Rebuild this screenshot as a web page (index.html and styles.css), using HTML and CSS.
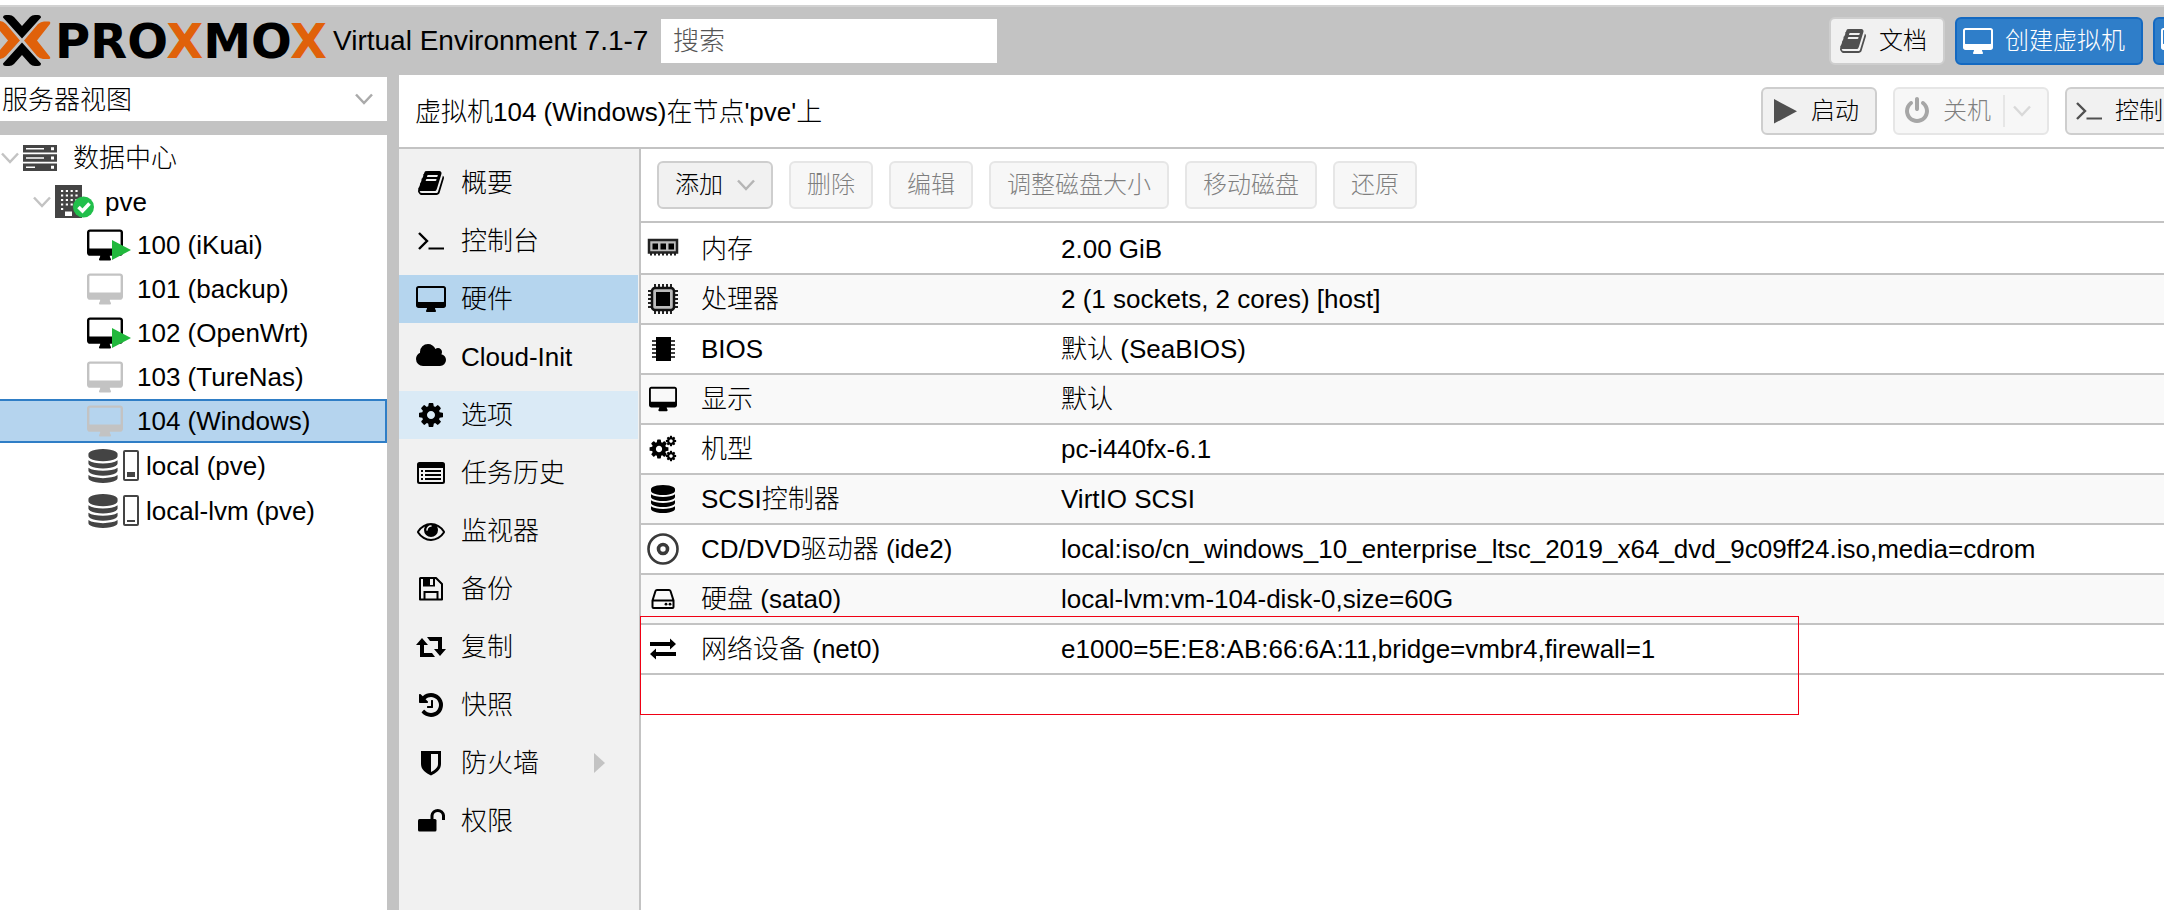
FILE: index.html
```html
<!DOCTYPE html>
<html lang="zh-CN">
<head>
<meta charset="utf-8">
<title>Proxmox Virtual Environment</title>
<link rel="stylesheet" href="styles.css">
</head>
<body>
<svg class="sprite" aria-hidden="true">
  <defs>
    <symbol id="i-desktop" viewBox="0 -64 1920 1792"><path d="M1792 992v-832q0-13-9.500-22.500t-22.500-9.500h-1600q-13 0-22.500 9.500t-9.500 22.500v832q0 13 9.500 22.500t22.500 9.500h1600q13 0 22.500-9.500t9.500-22.500zm128-832v1088q0 66-47 113t-113 47h-544q0 37 16 77.500t32 71 16 43.500q0 26-19 45t-45 19h-512q-26 0-45-19t-19-45q0-14 16-44t32-70 16-78h-544q-66 0-113-47t-47-113v-1088q0-66 47-113t113-47h1600q66 0 113 47t47 113z"/></symbol>
    <symbol id="i-book" viewBox="0 0 1792 1792"><path d="M1703 478q40 57 18 129l-275 906q-19 64-76.500 107.500t-122.500 43.500h-923q-77 0-148.500-53.500t-99.500-131.500q-24-67-2-127 0-4 3-27t4-37q1-8-3-21.500t-3-19.500q2-11 8-21t16.500-23.500 16.500-23.500q23-38 45-91.500t30-91.500q3-10 .5-30t-.5-28q3-11 17-28t17-23q21-36 42-92t25-90q1-9-2.500-32t.5-28q4-13 22-30.500t22-22.500q19-26 42.500-84.500t27.500-96.500q1-8-3-25.500t-2-26.500q2-8 9-18t18-23 17-21q8-12 16.500-30.500t15-35 16-36 19.500-32 26.500-23.500 36-11.500 47.500 5.500l-1 3q38-9 51-9h761q74 0 114 56t18 130l-274 906q-36 119-71.500 153.500t-128.500 34.500h-869q-27 0-38 15-11 16-1 43 24 70 144 70h923q29 0 56-15.500t35-41.500l300-987q7-22 5-57 38 15 59 43zm-1064 2q-4 13 2 22.500t20 9.500h608q13 0 25.500-9.500t16.500-22.500l21-64q4-13-2-22.500t-20-9.500h-608q-13 0-25.500 9.500t-16.500 22.500zm-83 256q-4 13 2 22.500t20 9.500h608q13 0 25.500-9.500t16.500-22.500l21-64q4-13-2-22.500t-20-9.500h-608q-13 0-25.500 9.500t-16.500 22.500z"/></symbol>
    <symbol id="i-cog" viewBox="0 0 1792 1792"><path d="M1152 896q0-106-75-181t-181-75-181 75-75 181 75 181 181 75 181-75 75-181zm512-109v222q0 12-8 23t-20 13l-185 28q-19 54-39 91 35 50 107 138 10 12 10 25t-9 23q-27 37-99 108t-94 71q-12 0-26-9l-138-108q-44 23-91 38-16 136-29 186-7 28-36 28h-222q-14 0-24.500-8.500t-11.500-21.500l-28-184q-49-16-90-37l-141 107q-10 9-25 9-14 0-25-11-126-114-165-168-7-10-7-23 0-12 8-23 15-21 51-66.500t54-70.500q-27-50-41-99l-183-27q-13-2-21-12.500t-8-23.500v-222q0-12 8-23t19-13l186-28q14-46 39-92-40-57-107-138-10-12-10-24 0-10 9-23 26-36 98.500-107.500t94.500-71.500q13 0 26 10l138 107q44-23 91-38 16-136 29-186 7-28 36-28h222q14 0 24.500 8.500t11.500 21.500l28 184q49 16 90 37l142-107q9-9 24-9 13 0 25 10 129 119 165 170 7 8 7 22 0 12-8 23-15 21-51 66.500t-54 70.500q26 50 41 98l183 28q13 2 21 12.500t8 23.500z"/></symbol>
    <symbol id="i-cogs" viewBox="0 0 28 28"><use href="#i-cog" x="-1" y="3" width="22" height="22"/><use href="#i-cog" x="16" y="0" width="12" height="12"/><use href="#i-cog" x="16" y="15" width="12" height="12"/></symbol>
    <symbol id="i-database" viewBox="0 0 1792 1792"><path d="M896 768q237 0 443-43t325-127v170q0 69-103 128t-280 93.500-385 34.500-385-34.500-280-93.500-103-128v-170q119 84 325 127t443 43zm0 768q237 0 443-43t325-127v170q0 69-103 128t-280 93.500-385 34.500-385-34.500-280-93.500-103-128v-170q119 84 325 127t443 43zm0-384q237 0 443-43t325-127v170q0 69-103 128t-280 93.500-385 34.500-385-34.500-280-93.500-103-128v-170q119 84 325 127t443 43zm0-1152q208 0 385 34.500t280 93.500 103 128v128q0 69-103 128t-280 93.500-385 34.500-385-34.500-280-93.500-103-128v-128q0-69 103-128t280-93.500 385-34.500z"/></symbol>
    <symbol id="i-eye" viewBox="0 0 1792 1792"><path d="M1664 960q-152-236-381-353 61 104 61 225 0 185-131.500 316.500t-316.500 131.500-316.500-131.500-131.500-316.500q0-121 61-225-229 117-381 353 133 205 333.500 326.500t434.500 121.500 434.500-121.500 333.500-326.500zm-720-384q0-20-14-34t-34-14q-125 0-214.500 89.500t-89.500 214.500q0 20 14 34t34 14 34-14 14-34q0-86 61-147t147-61q20 0 34-14t14-34zm848 384q0 34-20 69-140 230-376.500 368.500t-499.500 138.500-499.500-139-376.500-368q-20-35-20-69t20-69q140-229 376.500-368t499.500-139 499.500 139 376.500 368q20 35 20 69z"/></symbol>
    <symbol id="i-history" viewBox="0 0 1792 1792"><path d="M1664 896q0 156-61 298t-164 245-245 164-298 61q-172 0-327-72.500t-264-204.500q-7-10-6.500-22.500t8.500-20.500l137-138q10-9 25-9 16 2 23 12 73 95 179 147t225 52q104 0 198.500-40.500t163.500-109.500 109.500-163.500 40.500-198.500-40.500-198.500-109.500-163.500-163.500-109.500-198.500-40.500q-98 0-188 35.500t-160 101.500l137 138q31 30 14 69-17 40-59 40h-448q-26 0-45-19t-19-45v-448q0-42 40-59 39-17 69 14l130 129q107-101 244.500-156.500t284.500-55.500q156 0 298 61t245 164 164 245 61 298zm-640-288v448q0 14-9 23t-23 9h-320q-14 0-23-9t-9-23v-64q0-14 9-23t23-9h224v-352q0-14 9-23t23-9h64q14 0 23 9t9 23z"/></symbol>
    <symbol id="i-cloud" viewBox="64 64 1920 1792"><path d="M1984 1152q0 159-112.500 271.500t-271.500 112.500h-1088q-185 0-316.500-131.500t-131.500-316.500q0-132 71-241.500t187-163.500q-2-28-2-43 0-212 150-362t362-150q158 0 286.500 88t187.500 230q70-62 166-62 106 0 181 75t75 181q0 75-41 138 129 30 213 134.500t84 239.500z"/></symbol>
    <symbol id="i-power" viewBox="0 0 1792 1792"><path d="M1664 896q0 156-61 298t-164 245-245 164-298 61-298-61-245-164-164-245-61-298q0-182 80.500-343t226.500-270q43-32 95.500-25t83.500 50q32 42 24.500 94.500t-49.500 84.500q-98 74-151.500 181t-53.500 228q0 104 40.500 198.500t109.500 163.500 163.500 109.500 198.500 40.500 198.500-40.500 163.500-109.500 109.500-163.500 40.500-198.500q0-121-53.500-228t-151.500-181q-42-32-49.500-84.500t24.500-94.500q31-43 84-50t95 25q146 109 226.500 270t80.500 343zm-640-768v640q0 52-38 90t-90 38-90-38-38-90v-640q0-52 38-90t90-38 90 38 38 90z"/></symbol>
    <symbol id="i-terminal" viewBox="0 0 28 28"><path d="M2 6l8 8-8 8" fill="none" stroke="currentColor" stroke-width="2.400"/><path d="M11.500 20.500h15.500v2h-15.500z"/></symbol>
    <symbol id="i-play" viewBox="0 0 28 28"><path d="M3 2l23 12.300L3 26.500z"/></symbol>
    <symbol id="i-list" viewBox="0 0 28 28"><path fill-rule="evenodd" d="M2.500 3h23a2.500 2.500 0 0 1 2.500 2.500v17a2.500 2.500 0 0 1-2.500 2.500h-23a2.500 2.500 0 0 1-2.500-2.500v-17a2.500 2.500 0 0 1 2.500-2.500zM2 9v13.500l.5.5h23l.5-.5V9z"/><path d="M4 11h2v2H4zM4 15h2v2H4zM4 19h2v2H4zM8 11h16v2H8zM8 15h16v2H8zM8 19h16v2H8z"/></symbol>
    <symbol id="i-save" viewBox="0 0 28 28"><path d="M3.500 3h15.500l6 6v15.500H3V3.500z" fill="none" stroke="currentColor" stroke-width="2" stroke-linejoin="round"/><path fill-rule="evenodd" d="M6 3h12v8.500H6zM13 4v6h3V4z"/><path d="M7.500 25v-8h13v8" fill="none" stroke="currentColor" stroke-width="2"/></symbol>
    <symbol id="i-retweet" viewBox="0 0 30 28"><path d="M6 5l6 7H8v8h8l3 4H4V12H0zM24 23l-6-7h4V8h-8l-3-4h15v12h4z"/></symbol>
    <symbol id="i-shield" viewBox="0 0 28 28"><path fill-rule="evenodd" d="M4 2h20v13c0 6-5 9-10 11.500C9 24 4 21 4 15zM14 5v18c4-2 7-4.500 7-8V5z"/></symbol>
    <symbol id="i-unlock" viewBox="0 0 28 28"><rect x="1" y="12" width="18.500" height="12.500" rx="1.500"/><path d="M15 13V8.500a5.800 5.800 0 0 1 11.500 0V13" fill="none" stroke="currentColor" stroke-width="3"/></symbol>
    <symbol id="i-exchange" viewBox="0 0 28 28"><path d="M1 7h20V3.500l6 5.500-6 5.500V11H1zM27 17H7v-3.500L1 19l6 5.500V21h20z"/></symbol>
    <symbol id="i-hdd" viewBox="0 0 28 28"><path d="M3.500 15.500L6.500 6q.4-1 1.500-1h12q1.100 0 1.500 1l3 9.500v6.500q0 1-1 1h-19q-1 0-1-1zh21" fill="none" stroke="currentColor" stroke-width="2"/><circle cx="17" cy="19.200" r="1.400"/><circle cx="21" cy="19.200" r="1.400"/></symbol>
    <symbol id="i-bios" viewBox="0 0 28 28"><path d="M7 2h15v24H7z"/><path d="M3 6h23M3 10h23M3 14h23M3 18h23M3 22h23" stroke="currentColor" stroke-width="1.400"/></symbol>
    <symbol id="i-memory" viewBox="0 0 32 32"><path d="M4 18v4.500M8 18v4.500M12 18v4.500M16 18v4.500M20 18v4.500M24 18v4.500M28 18v4.500" stroke="#222" stroke-width="2"/><path d="M2 7h28v12.500H2z" fill="#bbb" stroke="#222" stroke-width="2.500"/><path d="M5.500 10.500h5.500v6H5.500zM13.500 10.500H19v6h-5.500zM21.500 10.500H27v6h-5.500z" fill="#000"/></symbol>
    <symbol id="i-cpu" viewBox="0 0 32 32"><path d="M8 1v30M12 1v30M16 1v30M20 1v30M24 1v30M1 8h30M1 12h30M1 16h30M1 20h30M1 24h30" stroke="#222" stroke-width="2"/><rect x="5" y="5" width="22" height="22" rx="3" fill="#bbb" stroke="#111" stroke-width="2.500"/><path d="M9 9h14v14H9z" fill="#000"/></symbol>
    <symbol id="i-cd" viewBox="0 0 32 32"><g fill="none" stroke="#3a3a3a"><circle cx="16" cy="16" r="14.500" stroke-width="2.600"/><circle cx="16" cy="16" r="4.500" stroke-width="3.600"/></g></symbol>
    <symbol id="i-server" viewBox="0 0 34 28"><path fill-rule="evenodd" d="M0 1h34v7.500H0zM3 4v1.600h18V4zM28 3.200v3h3v-3zM0 10.200h34v7.500H0zM3 13.200v1.600h18v-1.600zM28 12.400v3h3v-3zM0 19.500h34V27H0zM3 22.500v1.600h9v-1.600zM28 21.700v3h3v-3z"/></symbol>
    <symbol id="i-building" viewBox="0 0 40 36"><path d="M0 1h27v33H0z"/><path d="M6 7h17M6 11.500h17M6 16h17M6 20.500h17M6 25h4" stroke="#fff" stroke-width="2.200" stroke-dasharray="2.200 2.600"/><path d="M10 27.500h7V32h-7z" fill="#fff"/><circle cx="28.500" cy="23" r="10.500" fill="#21bf4b"/><path d="M23.500 23l4 4 7-7.500" fill="none" stroke="#fff" stroke-width="3.600"/></symbol>
    <symbol id="i-chevron" viewBox="0 0 18 12"><path d="M1 1.500l8 8.500 8-8.500" fill="none" stroke="currentColor" stroke-width="2.500"/></symbol>
    <symbol id="i-mark" viewBox="0 7 51 68">
      <path d="M24 40.500L38 24q3-2.500 6-2.500h5q2 .5 1 2.500L37 40.500 50 57q1 2-2 2h-5q-3 0-6-3zM20 40.500L6 24q-3-3-6-3v10l8 9.500L0 50v9q3 0 6-3z" fill="#e0610a"/>
      <path d="M3 17.500q0-2.500 3-2.500h3q3 0 5 2l8 9 8-9q2-2 5-2h3q3 0 3 2.500L22 38.500zM3 63.500q0 2.500 3 2.500h3q3 0 5-2l8-9 8 9q2 2 5 2h3q3 0 3-2.500L22 42.500z"/>
    </symbol>
  </defs>
</svg>

<div class="app">
  <header class="topbar">
    <div class="brand">
      <svg class="mark"><use href="#i-mark"/></svg>
      <span class="wordmark">PRO<span class="accent">X</span>MO<span class="accent">X</span></span>
      <span class="version">Virtual Environment 7.1-7</span>
    </div>
    <input class="search" type="text" placeholder="搜索" aria-label="搜索">
    <div class="top-actions">
      <button class="btn"><svg class="icon dim"><use href="#i-book"/></svg>文档</button>
      <button class="btn primary"><svg class="icon wide"><use href="#i-desktop"/></svg>创建虚拟机</button>
      <button class="btn primary" aria-label="创建CT"><svg class="icon wide"><use href="#i-desktop"/></svg></button>
    </div>
  </header>

  <div class="workspace">
    <aside class="sidebar">
      <div class="view-picker">
        <select aria-label="视图"><option>服务器视图</option></select>
        <svg class="caret"><use href="#i-chevron"/></svg>
      </div>
      <ul class="tree">
        <li class="row level0"><svg class="arrow"><use href="#i-chevron"/></svg><svg class="server"><use href="#i-server"/></svg>数据中心</li>
        <li class="row level1"><svg class="arrow"><use href="#i-chevron"/></svg><svg class="node"><use href="#i-building"/></svg>pve</li>
        <li class="row vm running"><span class="vm-icon"><svg><use href="#i-desktop"/></svg></span>100 (iKuai)</li>
        <li class="row vm"><span class="vm-icon"><svg><use href="#i-desktop"/></svg></span>101 (backup)</li>
        <li class="row vm running"><span class="vm-icon"><svg><use href="#i-desktop"/></svg></span>102 (OpenWrt)</li>
        <li class="row vm"><span class="vm-icon"><svg><use href="#i-desktop"/></svg></span>103 (TureNas)</li>
        <li class="row vm selected"><span class="vm-icon"><svg><use href="#i-desktop"/></svg></span>104 (Windows)</li>
        <li class="row storage"><svg class="disk"><use href="#i-database"/></svg><span class="usage"><span style="height:5px"></span></span>local (pve)</li>
        <li class="row storage"><svg class="disk"><use href="#i-database"/></svg><span class="usage"><span style="height:2px"></span></span>local-lvm (pve)</li>
      </ul>
    </aside>

    <main class="panel">
      <div class="title-bar">
        <h1>虚拟机104 (Windows)在节点'pve'上</h1>
        <div class="title-actions">
          <button class="btn"><svg class="icon dim"><use href="#i-play"/></svg>启动</button>
          <button class="btn split" disabled><svg class="icon dim"><use href="#i-power"/></svg>关机<span class="divider"></span><svg class="caret"><use href="#i-chevron"/></svg></button>
          <button class="btn"><svg class="icon dim"><use href="#i-terminal"/></svg>控制台</button>
        </div>
      </div>
      <div class="content">
        <nav class="menu">
          <a href="#"><svg class="icon"><use href="#i-book"/></svg>概要</a>
          <a href="#"><svg class="icon"><use href="#i-terminal"/></svg>控制台</a>
          <a href="#" class="active"><svg class="icon wide"><use href="#i-desktop"/></svg>硬件</a>
          <a href="#"><svg class="icon wide"><use href="#i-cloud"/></svg>Cloud-Init</a>
          <a href="#" class="hover"><svg class="icon"><use href="#i-cog"/></svg>选项</a>
          <a href="#"><svg class="icon"><use href="#i-list"/></svg>任务历史</a>
          <a href="#"><svg class="icon"><use href="#i-eye"/></svg>监视器</a>
          <a href="#"><svg class="icon"><use href="#i-save"/></svg>备份</a>
          <a href="#"><svg class="icon wide"><use href="#i-retweet"/></svg>复制</a>
          <a href="#"><svg class="icon"><use href="#i-history"/></svg>快照</a>
          <a href="#"><svg class="icon"><use href="#i-shield"/></svg>防火墙<span class="more"></span></a>
          <a href="#"><svg class="icon"><use href="#i-unlock"/></svg>权限</a>
        </nav>
        <section class="hardware">
          <div class="toolbar">
            <button class="btn">添加<svg class="caret"><use href="#i-chevron"/></svg></button>
            <button class="btn" disabled>删除</button>
            <button class="btn" disabled>编辑</button>
            <button class="btn" disabled>调整磁盘大小</button>
            <button class="btn" disabled>移动磁盘</button>
            <button class="btn" disabled>还原</button>
          </div>
          <div class="grid">
            <table>
              <colgroup><col class="c-icon"><col class="c-name"><col></colgroup>
              <tbody>
                <tr><td><svg class="pic"><use href="#i-memory"/></svg></td><th scope="row">内存</th><td>2.00 GiB</td></tr>
                <tr><td><svg class="pic"><use href="#i-cpu"/></svg></td><th scope="row">处理器</th><td>2 (1 sockets, 2 cores) [host]</td></tr>
                <tr><td><svg class="icon"><use href="#i-bios"/></svg></td><th scope="row">BIOS</th><td>默认 (SeaBIOS)</td></tr>
                <tr><td><svg class="icon"><use href="#i-desktop"/></svg></td><th scope="row">显示</th><td>默认</td></tr>
                <tr><td><svg class="icon"><use href="#i-cogs"/></svg></td><th scope="row">机型</th><td>pc-i440fx-6.1</td></tr>
                <tr><td><svg class="icon"><use href="#i-database"/></svg></td><th scope="row">SCSI控制器</th><td>VirtIO SCSI</td></tr>
                <tr><td><svg class="pic"><use href="#i-cd"/></svg></td><th scope="row">CD/DVD驱动器 (ide2)</th><td>local:iso/cn_windows_10_enterprise_ltsc_2019_x64_dvd_9c09ff24.iso,media=cdrom</td></tr>
                <tr><td><svg class="icon"><use href="#i-hdd"/></svg></td><th scope="row">硬盘 (sata0)</th><td>local-lvm:vm-104-disk-0,size=60G</td></tr>
                <tr><td><svg class="icon"><use href="#i-exchange"/></svg></td><th scope="row">网络设备 (net0)</th><td>e1000=5E:E8:AB:66:6A:11,bridge=vmbr4,firewall=1</td></tr>
              </tbody>
            </table>
            <div class="highlight"></div>
          </div>
        </section>
      </div>
    </main>
  </div>
</div>
</body>
</html>
```
FILE: styles.css
```css
* { box-sizing: border-box; }

body {
  margin: 0;
  overflow: hidden;
  background: #fff;
  color: #000;
  font: 300 26px/32px "Liberation Sans", "Noto Sans CJK SC", sans-serif;
}

button, input, select { font: inherit; color: inherit; }
svg { flex: none; fill: currentColor; }
.sprite { position: absolute; width: 0; height: 0; }

.app {
  display: flex;
  flex-direction: column;
  height: 100vh;
  padding-top: 5px;
  overflow: hidden;
}

/* Top bar */
.topbar {
  display: flex;
  flex: none;
  align-items: center;
  height: 70px;
  background: #c3c3c3;
  border-top: 2px solid #d2d2d2;
}

.brand {
  display: flex;
  align-items: center;
  width: 661px;
  white-space: nowrap;
}
.mark { width: 51px; height: 68px; }
.wordmark {
  width: 282px;
  padding-left: 4px;
  font: bold 48px/48px "DejaVu Sans", sans-serif;
}
.accent { color: #e0610a; }
.version { font-size: 28px; }

.search {
  width: 336px;
  height: 44px;
  padding: 0 12px;
  background: #fff;
  border: 0;
  border-radius: 0;
}
.search::placeholder { color: #555; opacity: 1; }

.top-actions, .title-actions {
  display: flex;
  flex: none;
  margin-left: auto;
}
.top-actions { gap: 10px; margin-right: -57px; }
.title-actions { gap: 16px; margin-right: -41px; }

/* Buttons */
.btn {
  display: flex;
  flex: none;
  align-items: center;
  height: 48px;
  padding: 0 16px;
  background: #f1f1f1;
  border: 2px solid #cecece;
  border-radius: 6px;
  font-size: 24px;
  white-space: nowrap;
}
.btn:disabled { opacity: .5; }
.btn .icon { margin-right: 12px; }
.btn .caret { margin-left: 14px; color: #b5b5b5; }
.top-actions .btn, .title-actions .btn { padding: 0 16px 0 8px; }
.btn.primary { background: #2f7ec9; border-color: #1469c1; color: #fff; }
.top-actions .btn.primary { padding: 0 16px 0 6px; }
.btn .divider {
  width: 2px;
  height: 32px;
  margin-left: 12px;
  background: #cecece;
}
.btn.split .caret { margin-left: 8px; }

.icon { width: 28px; height: 28px; }
.icon.wide { width: 30px; }
.icon.dim { color: #505050; }
.caret { width: 18px; height: 12px; color: #aaa; }

/* Resource tree */
.workspace { display: flex; flex: 1; min-height: 0; background: #c3c3c3; }
.sidebar {
  display: flex;
  flex: none;
  flex-direction: column;
  gap: 14px;
  width: 387px;
  margin-right: 12px;
  padding-top: 2px;
}
.view-picker {
  display: flex;
  align-items: center;
  height: 44px;
  padding-right: 14px;
  background: #fff;
}
.view-picker select {
  flex: 1;
  padding: 2px 2px 0;
  background: none;
  border: 0;
  appearance: none;
}
.tree {
  flex: 1;
  margin: 0;
  padding: 0;
  background: #fff;
  list-style: none;
}
.row {
  display: flex;
  align-items: center;
  height: 44px;
  border: 2px solid transparent;
  border-left: 0;
  white-space: nowrap;
}
.row.storage { height: 45px; padding-left: 86px; }
.row.selected { background: #b5d4ee; border-color: #2f7ec6; }
.level0, .level1 { padding-top: 2px; }
.level1 { padding-left: 32px; }
.arrow { width: 18px; height: 12px; margin: 0 4px 0 1px; color: #c3c3c3; }
.server { width: 34px; height: 28px; margin-right: 16px; color: #444; }
.node { width: 40px; height: 36px; margin-right: 10px; color: #444; }
.vm { padding-left: 87px; }
.vm-icon { position: relative; width: 50px; height: 34px; color: #c3c3c3; }
.vm-icon svg { width: 36px; height: 34px; }
.running .vm-icon { color: #000; }
.running .vm-icon::after {
  position: absolute;
  left: 25px;
  top: 12px;
  border: solid transparent;
  border-width: 10px 0 10px 19px;
  border-left-color: #21b83c;
  content: "";
}
.disk { width: 34px; height: 34px; color: #444; }
.usage {
  display: flex;
  align-items: flex-end;
  width: 16px;
  height: 31px;
  margin: 0 7px 0 3px;
  padding: 2px;
  border: 2px solid #444;
  border-radius: 2px;
}
.usage span { width: 8px; background: #444; }

/* Guest panel */
.panel {
  display: flex;
  flex: 1;
  flex-direction: column;
  min-width: 0;
  background: #fff;
}
.title-bar {
  display: flex;
  flex: none;
  align-items: center;
  height: 74px;
  padding-left: 16px;
  border-bottom: 2px solid #c3c3c3;
}
.title-bar h1 { margin: 0; padding-top: 2px; font: inherit; white-space: nowrap; }
.content { display: flex; flex: 1; min-height: 0; }

.menu {
  display: flex;
  flex: none;
  flex-direction: column;
  gap: 10px;
  width: 242px;
  padding: 10px 1px 0 0;
  background: #f1f1f1;
  border-right: 2px solid #c3c3c3;
}
.menu a {
  display: grid;
  grid-template-columns: 32px 1fr auto;
  align-items: center;
  column-gap: 14px;
  height: 48px;
  padding: 0 33px 0 16px;
  color: inherit;
  text-decoration: none;
}
.menu .icon { justify-self: center; }
.menu .active { background: #b5d5ee; }
.menu .hover { background: #daeaf6; }
.more {
  border: solid transparent;
  border-width: 10px 0 10px 11px;
  border-left-color: #c3c3c3;
}

.hardware { flex: 1; min-width: 0; }
.toolbar {
  display: flex;
  gap: 16px;
  padding: 12px 16px;
  border-bottom: 2px solid #c3c3c3;
}
.grid { position: relative; padding-top: 2px; }
table { width: 100%; border-collapse: separate; border-spacing: 0; table-layout: fixed; }
.c-icon { width: 60px; }
.c-name { width: 360px; }
td, th {
  height: 50px;
  padding: 0;
  border-bottom: 2px solid #c3c3c3;
  font-weight: inherit;
  text-align: left;
  white-space: nowrap;
}
td:first-child { padding-left: 8px; }
td svg { display: block; }
td .pic { width: 32px; height: 32px; margin-left: -2px; }
tr:nth-child(even) { background: #f9f9f9; }

/* Marker frame around the network device */
.highlight {
  position: absolute;
  left: -1px;
  bottom: -40px;
  width: 1159px;
  height: 99px;
  border: 1px solid #f00014;
}
```
